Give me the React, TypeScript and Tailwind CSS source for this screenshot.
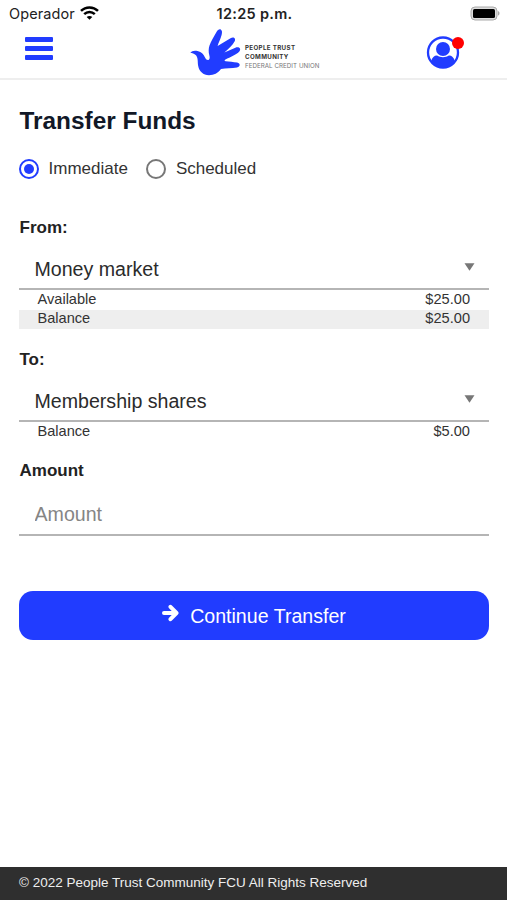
import { clsx } from 'clsx';

type BalanceRow = {
  label: string;
  value: string;
};

type AccountSelectProps = {
  label: string;
  account: string;
  rows: BalanceRow[];
};

function StatusBar() {
  return (
    <div className="h-[28px] grid grid-cols-3 items-center pl-[9px] pr-[7px] font-['Inter',sans-serif] text-[#222]">
      <div className="flex items-center gap-[5px] text-[14.5px] tracking-[0.1px]">
        <span>Operador</span>
        <svg className="-mt-[2px]" width="19" height="14" viewBox="0 0 19 14" fill="none" stroke="#000" strokeWidth="2.5">
          <path d="M1 4.9C5.8.2 13.2.2 18 4.9" />
          <path d="M4.2 8.2c3-2.9 7.6-2.9 10.6 0" />
          <path d="M9.5 13.8 6.7 11c1.6-1.5 4-1.5 5.6 0z" fill="#000" stroke="none" />
        </svg>
      </div>
      <span className="text-center text-[14.5px] font-semibold tracking-[0.3px] whitespace-nowrap">
        12:25 p.m.
      </span>
      <svg className="-mt-[2px] justify-self-end" width="30" height="15" viewBox="0 0 30 15">
        <rect x="1" y="1" width="26" height="13" rx="4" fill="#ddd" stroke="#aaa" />
        <rect x="3" y="3" width="22" height="9" rx="1.5" fill="#000" />
        <path d="M28 5v4.6c2-.8 2-3.8 0-4.6z" fill="#aaa" />
      </svg>
    </div>
  );
}

function Logo() {
  return (
    <div className="flex w-[132px] items-start">
      <svg className="shrink-0" width="53" height="48" viewBox="0 0 53 48" fill="#213cff">
        <path d="M.3 24.8C1.8 22.8 4.500 22.300 7.500 23c4.200.9 6.300 3.700 7.700 6.800.9 2 2.400 2.700 3.600 2 1-.7 1.100-2.200.5-4.500-.9-3.600-.8-6.800.2-9.800 1.400-4 4-8.500 7-13.500 1.300-2.200 3.100-3.300 4.500-2.300 1.300.9 1.200 3 .6 5.200-1.100 4-3 7.500-4 11L40.500 10.200c2.900-2 5.700 0 4.200 3-2.200 4.300-6.100 7.300-10.300 11.300l11-4.800c3.600-1.300 6.200 1 3.900 3.900-2.900 3.300-9.100 5.500-13.800 8-1.300.8-1.200 1.400.3 1.700 3.200.5 7.800.7 11.300 1.300 3.600.7 3.400 4.400-.1 4.900-5.200.8-10.900.5-16 1.500-3.200 4.200-6.900 6.200-12 6.200-5.800 0-9.800-3.800-10.800-9.200-.8-4.300.2-7.500-2.200-10.700C4.200 25.600 2.200 25.200.3 24.800z" />
      </svg>
      <div className="ml-[2px] mt-[14.500px] font-['Inter',sans-serif] text-[6.200px] leading-[9.300px] text-[#333] whitespace-nowrap">
        <p className="font-bold tracking-[0.350px]">PEOPLE TRUST</p>
        <p className="font-bold tracking-[0.350px]">COMMUNITY</p>
        <p className="text-[#777] tracking-[0.050px]">FEDERAL CREDIT UNION</p>
      </div>
    </div>
  );
}

function Header() {
  return (
    <header className="h-[52px] border-b-2 border-[#eee] flex items-start justify-between pl-[25px] pr-[43px]">
      <button aria-label="Menu" className="mt-[9px] flex w-[28px] flex-col gap-[4px]">
        <span className="h-[5px] rounded-[1px] bg-[#213cff]" />
        <span className="h-[5px] rounded-[1px] bg-[#213cff]" />
        <span className="h-[5px] rounded-[1px] bg-[#213cff]" />
      </button>
      <div className="ml-[33px]">
        <Logo />
      </div>
      <button aria-label="Profile" className="mt-[8px]">
        <svg width="38" height="34" viewBox="0 0 38 34">
          <circle cx="17" cy="16.5" r="15" fill="none" stroke="#213cff" strokeWidth="2.3" />
          <circle cx="17" cy="13" r="7" fill="#213cff" />
          <path d="M5 25.5c1.2-4.2 3.6-6.1 6.1-5.9 3.6 2.3 8.2 2.3 11.8 0 2.5-.2 4.9 1.7 6.1 5.9C23 33.500 11 33.500 5 25.500z" fill="#213cff" />
          <circle cx="32" cy="7" r="6" fill="#f00" />
        </svg>
      </button>
    </header>
  );
}

function Radio({ label, checked }: { label: string; checked?: boolean }) {
  return (
    <label className="flex items-center gap-[9.5px] text-[17px] text-[#333]">
      <span
        className={clsx(
          'flex size-[20px] items-center justify-center rounded-full border-2',
          checked ? 'border-[#213cff]' : 'border-[#777]',
        )}
      >
        {checked && <span className="size-[10px] rounded-full bg-[#213cff]" />}
      </span>
      {label}
    </label>
  );
}

function AccountSelect({ label, account, rows }: AccountSelectProps) {
  return (
    <section>
      <h2 className="h-[20px] pl-[0.5px] text-[17px] leading-[20px] font-bold text-[#222]">{label}</h2>
      <div className="mt-[11px] flex h-[41px] items-center justify-between border-b-2 border-[#b5b5b5] pl-[15.5px] pr-[14.5px]">
        <span className="pt-[2px] text-[19.6px] text-[#2b2b2b]">{account}</span>
        <svg className="-mt-[4px]" width="11" height="8" viewBox="0 0 11 8">
          <path d="M.5.3h10L5.5 7.700z" fill="#777" />
        </svg>
      </div>
      <div>
        {rows.map((row) => (
          <div
            key={row.label}
            className="flex h-[19.5px] items-center justify-between pl-[18.5px] pr-[19px] text-[14.6px] text-[#333] even:bg-[#eee]"
          >
            <span>{row.label}</span>
            <span>{row.value}</span>
          </div>
        ))}
      </div>
    </section>
  );
}

export default function App() {
  return (
    <div className="flex h-[900px] w-[507px] flex-col bg-white font-['Liberation_Sans',Arial,sans-serif]">
      <StatusBar />
      <Header />

      <main className="flex-1 pl-[19px] pr-[18px] pt-[26px]">
        <h1 className="pl-[0.5px] text-[24.4px] leading-[30px] font-bold text-[#111827]">Transfer Funds</h1>

        <div className="mt-[22px] flex h-[22px] items-center gap-[18.5px]">
          <Radio label="Immediate" checked />
          <Radio label="Scheduled" />
        </div>

        <div className="mt-[38px] h-[132px]">
          <AccountSelect
            label="From:"
            account="Money market"
            rows={[
              { label: 'Available', value: '$25.00' },
              { label: 'Balance', value: '$25.00' },
            ]}
          />
        </div>
        <div className="h-[111px]">
          <AccountSelect
            label="To:"
            account="Membership shares"
            rows={[{ label: 'Balance', value: '$5.00' }]}
          />
        </div>

        {/* Amount */}
        <h2 className="pl-[0.5px] text-[17px] leading-[20px] font-bold text-[#222]">Amount</h2>
        <input
          placeholder="Amount"
          className="mt-[14px] block h-[41px] w-full border-b-2 border-[#b5b5b5] px-[15.5px] text-[19.6px] outline-none placeholder:text-[#858585]"
        />

        <button className="mt-[55px] flex h-[49px] w-full items-center justify-center rounded-[14px] bg-[#213cff] text-[19.6px] text-white">
          <svg
            className="mr-[11px] -mt-[5px]"
            width="17"
            height="18"
            viewBox="0 0 17 18"
            fill="none"
            stroke="#fff"
            strokeWidth="4"
            strokeLinecap="round"
            strokeLinejoin="round"
          >
            <path d="M2 9h12M8.5 2.8 14.5 9l-6 6.2" />
          </svg>
          <span className="pt-[2px]">Continue Transfer</span>
        </button>
      </main>

      <footer className="flex h-[33px] items-center bg-[#2f2f2f] pb-px pl-[19px] text-[13.5px] text-[#eee]">
        © 2022 People Trust Community FCU All Rights Reserved
      </footer>
    </div>
  );
}
